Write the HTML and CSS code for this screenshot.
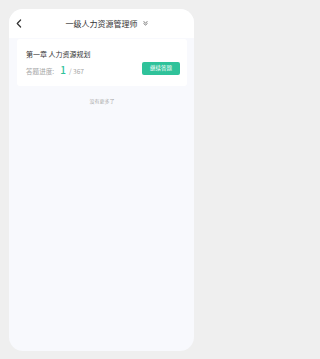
FILE: index.html
```html
<!DOCTYPE html>
<html lang="zh">
<head>
<meta charset="utf-8">
<title>一级人力资源管理师</title>
<link rel="stylesheet" href="styles.css">
</head>
<body>
<div class="phone">
  <header class="topbar">
    <div class="back">
      <svg width="6" height="9" viewBox="0 0 6 9"><polyline points="4.6,1 1.2,4.5 4.6,8" fill="none" stroke="#333" stroke-width="1.2" stroke-linecap="round" stroke-linejoin="round"/></svg>
    </div>
    <div class="title">一级人力资源管理师</div>
    <div class="more">
      <svg width="5" height="5" viewBox="0 0 5 5"><polyline points="0.8,0.6 2.5,2 4.2,0.6" fill="none" stroke="#555" stroke-width="0.8" stroke-linecap="round" stroke-linejoin="round"/><polyline points="0.8,2.6 2.5,4 4.2,2.6" fill="none" stroke="#555" stroke-width="0.8" stroke-linecap="round" stroke-linejoin="round"/></svg>
    </div>
  </header>
  <main class="content">
    <section class="card">
      <div class="card-title">第一章 人力资源规划</div>
      <div class="card-row">
        <div class="progress">
          <span class="label">答题进度:</span>
          <span class="done">1</span>
          <span class="total">/ 367</span>
        </div>
        <button class="btn">继续答题</button>
      </div>
    </section>
    <p class="end">没有更多了</p>
  </main>
</div>
</body>
</html>
```
FILE: styles.css
```css
html {
  background: #efefef;
}
body {
  margin: 0;
  padding: 9px 8px 8px 9px;
  box-sizing: border-box;
  width: 202px;
  height: 359px;
  background: #efefef;
  font-family: "Noto Sans CJK SC", "Noto Sans", sans-serif;
}
.phone {
  width: 185px;
  height: 342px;
  border-radius: 14px;
  background: #f8f9fd;
  overflow: hidden;
}
.topbar {
  height: 29px;
  background: #fff;
  display: grid;
  grid-template-columns: 1fr auto 1fr;
  align-items: center;
}
.back {
  padding-left: 7px;
  display: flex;
  align-items: center;
}
.back svg {
  display: block;
}
.title {
  font-size: 8px;
  line-height: 10px;
  color: #333;
}
.more {
  padding-left: 5px;
  display: flex;
  align-items: center;
}
.more svg {
  display: block;
}
.content {
  padding: 1px 7px 0 8px;
}
.card {
  background: #fff;
  border-radius: 3px;
  padding: 11px 7px 11px 9px;
}
.card-title {
  font-size: 7px;
  line-height: 9px;
  color: #333;
}
.card-row {
  margin-top: 3px;
  display: flex;
  justify-content: space-between;
  align-items: flex-end;
}
.progress {
  display: flex;
  align-items: baseline;
  gap: 3px;
  line-height: 10px;
  margin-bottom: -1px;
}
.label {
  font-size: 6.6px;
  color: #a5a5a5;
}
.done {
  font-size: 10px;
  color: #2fc29a;
  font-weight: 500;
  margin-left: 3px;
}
.total {
  font-size: 6.6px;
  color: #a5a5a5;
}
.btn {
  width: 38px;
  height: 13px;
  border: 0;
  padding: 0;
  border-radius: 2px;
  background: #2fc29a;
  color: #fff;
  font-family: inherit;
  font-size: 5.5px;
  line-height: 13px;
}
.end {
  margin: 11px 0 0;
  text-align: center;
  font-size: 5px;
  line-height: 7px;
  color: #aaa;
}
```
